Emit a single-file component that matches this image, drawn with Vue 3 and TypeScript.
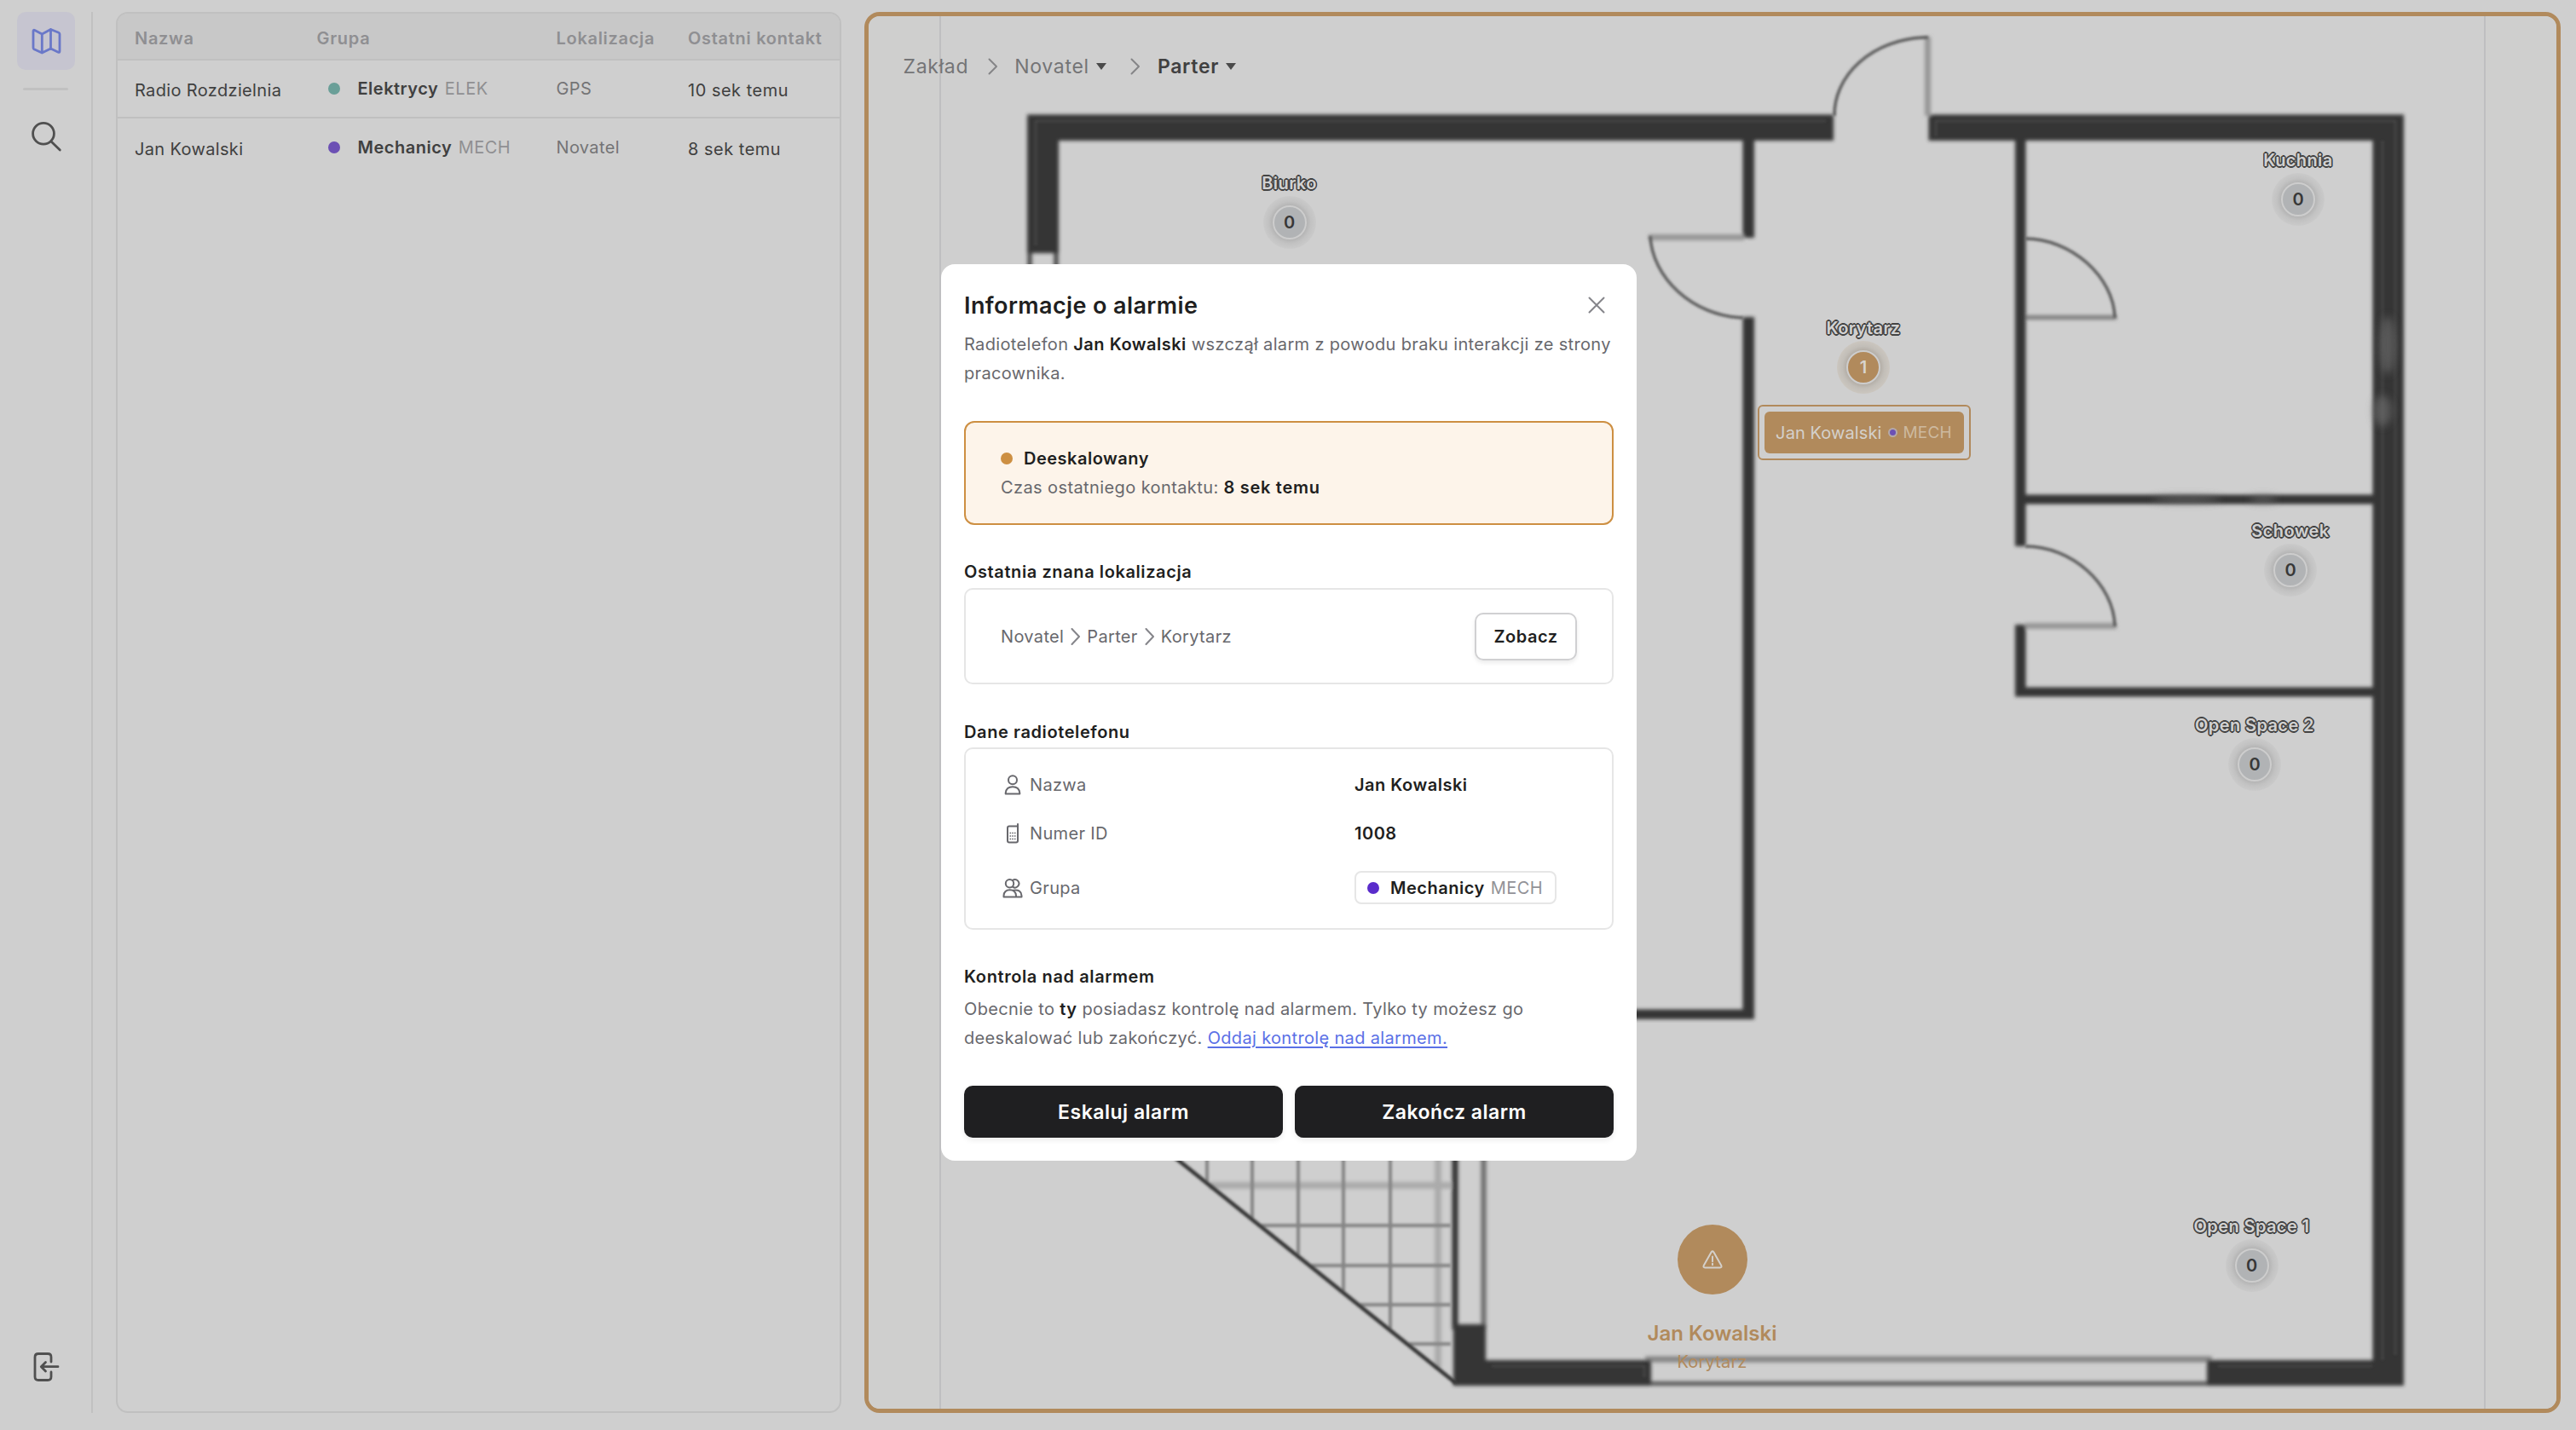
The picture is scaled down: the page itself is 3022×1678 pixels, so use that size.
<script setup lang="ts">
interface Radio {
  name: string
  group: string
  code: string
  color: string
  location: string
  contact: string
}

interface Zone {
  name: string
  count: number
  x: number
  y: number
  alarm?: boolean
}

const radios: Radio[] = [
  { name: 'Radio Rozdzielnia', group: 'Elektrycy', code: 'ELEK', color: '#6a9f98', location: 'GPS', contact: '10 sek temu' },
  { name: 'Jan Kowalski', group: 'Mechanicy', code: 'MECH', color: '#6c50b4', location: 'Novatel', contact: '8 sek temu' },
]

const zones: Zone[] = [
  { name: 'Biurko', count: 0, x: 493.5, y: 241.5 },
  { name: 'Kuchnia', count: 0, x: 1677, y: 214.5 },
  { name: 'Korytarz', count: 1, x: 1167, y: 412, alarm: true },
  { name: 'Schowek', count: 0, x: 1668, y: 650 },
  { name: 'Open Space 2', count: 0, x: 1626, y: 878 },
  { name: 'Open Space 1', count: 0, x: 1622.5, y: 1466 },
]

const gridX = [1416, 1469, 1523, 1576, 1631]
const gridY = [1438, 1485, 1531, 1577]
const diagonalY = (x: number): number => 1362 + (x - 1383) * 0.805
const diagonalX = (y: number): number => 1383 + (y - 1362) / 0.805
</script>

<template>
  <div class="app">
    <nav class="rail">
      <button class="rail-item active">
        <svg width="40" height="40" viewBox="0 0 40 40">
          <path d="M15.3 12 25.5 6.5 34.8 10.2Q36 10.7 36 12V32Q36 33.9 34.3 33.2L25.5 29 15.3 34 6 29.7Q5 29.2 5 28V8.8Q5 6.7 6.8 7.5ZM15.3 12V34M25.5 6.5V29" />
        </svg>
      </button>
      <span class="rail-line"></span>
      <button class="rail-item">
        <svg width="40" height="40" viewBox="0 0 40 40">
          <circle cx="17" cy="16.7" r="12.4" />
          <path d="M26 26 36.3 36" />
        </svg>
      </button>
      <span class="rail-space"></span>
      <button class="rail-item">
        <svg width="40" height="40" viewBox="0 0 40 40">
          <path d="M26 14V8.5Q26 4.5 22 4.5H11Q7 4.5 7 8.5V31.5Q7 35.5 11 35.5H22Q26 35.5 26 31.5V26M34 19.7H15M19.5 14.5 14.3 19.7 19.5 25" />
        </svg>
      </button>
    </nav>

    <section class="table">
      <div class="tr head">
        <span>Nazwa</span><span>Grupa</span><span>Lokalizacja</span><span>Ostatni kontakt</span>
      </div>
      <div v-for="r in radios" :key="r.name" class="tr row">
        <span class="main">{{ r.name }}</span>
        <span class="grp"><i class="dot" :style="{ background: r.color }"></i><b>{{ r.group }}</b><em>{{ r.code }}</em></span>
        <span class="loc">{{ r.location }}</span>
        <span class="main contact">{{ r.contact }}</span>
      </div>
    </section>

    <main class="map">
      <svg class="plan" viewBox="1019 19 1980 1634" width="1980" height="1634">
        <defs>
          <filter id="soft" filterUnits="userSpaceOnUse" x="1019" y="19" width="1980" height="1634">
            <feGaussianBlur stdDeviation="2" />
          </filter>
          <filter id="fine" filterUnits="userSpaceOnUse" x="1019" y="19" width="1980" height="1634">
            <feGaussianBlur stdDeviation="1.4" />
          </filter>
          <filter id="smudge" filterUnits="userSpaceOnUse" x="1019" y="19" width="1980" height="1634">
            <feGaussianBlur stdDeviation="5" />
          </filter>
        </defs>
        <rect x="1019" y="19" width="83" height="1634" fill="#cfcfce" />
        <rect x="2916" y="19" width="83" height="1634" fill="#cfcfce" />
        <path d="M1103 19V1653M2915 19V1653" stroke="#bfbfc1" stroke-width="2" />

        <g filter="url(#soft)">
          <path d="M1419 1391H1702M1687 1340V1605" fill="none" stroke="#ababab" stroke-width="8" />
          <path d="M1707 1340V1560" stroke="#303030" stroke-width="7" />
          <path d="M1740.500 1340V1560" stroke="#6c6c6c" stroke-width="6" />
          <path d="M1208 290V340M1239 290V340" stroke="#404040" stroke-width="5" />
          <path d="M1930 1595H2595" stroke="#858585" stroke-width="7" />
          <path d="M1930 1623.500H2595" stroke="#585858" stroke-width="5" />

          <g fill="#353535">
            <path d="M1205 134.500H2151V165H1242V297H1205Z" />
            <path d="M2262.500 134.500H2820V1626H2589V1596H2783.500V165H2262.500Z" />
            <path d="M1705 1554H1743V1596H1937V1626H1705Z" />
            <path d="M2044.500 160H2058V279H2044.500ZM2044.500 372H2058V1196H1880V1184.500H2044.500Z" />
            <path d="M2364 160H2376.500V580.500H2786V591.500H2376.500V641H2364ZM2364 733H2376.500V806.500H2786V817.500H2364Z" />
          </g>
          <g fill="none" stroke="#969696">
            <path d="M2261.500 43V136M1934 278.500H2046" stroke-width="7" />
            <path d="M2376 372.500H2483" stroke="#7c7c7c" stroke-width="5" />
            <path d="M2376 734.500H2483" stroke-width="7" />
          </g>
        </g>
        <g filter="url(#fine)" fill="none">
          <g stroke="#858585" stroke-width="4">
            <path v-for="x in gridX" :key="'x' + x" :d="`M${x} 1340V${diagonalY(x)}`" />
            <path v-for="y in gridY" :key="'y' + y" :d="`M${diagonalX(y)} ${y}H1702`" />
          </g>
          <path d="M1370 1351.500 1708 1623" stroke="#333" stroke-width="4.500" />
          <g stroke="#484848" stroke-width="2">
            <path d="M2142 142H1215V288M2810 1590V142H2271V160M2795 165V1596M2602 1603H2783M1750 1603H1929V1616" />
          </g>
          <g stroke="#5a5a5a" stroke-width="3.500">
            <path d="M2152 136A110 91 0 0 1 2256 44H2262" />
            <path d="M1936 277C1938 325 1985 371 2045 373" />
            <path d="M2376 280C2430 280 2480 325 2481 373" />
            <path d="M2376 641C2430 641 2480 685 2481 735" />
          </g>
        </g>
        <g filter="url(#smudge)" fill="#777">
          <ellipse cx="2801" cy="405" rx="9" ry="34" opacity="0.55" />
          <ellipse cx="2795" cy="482" rx="11" ry="18" opacity="0.55" />
          <ellipse cx="2565" cy="586" rx="40" ry="4" opacity="0.6" />
          <ellipse cx="2655" cy="586" rx="16" ry="4" opacity="0.6" />
        </g>
      </svg>

      <div v-for="z in zones" :key="z.name" class="zone" :class="{ alarm: z.alarm }" :style="{ left: z.x + 'px', top: z.y + 'px' }">
        <span class="zone-name">{{ z.name }}</span>
        <span class="zone-halo"><span class="zone-count">{{ z.count }}</span></span>
      </div>

      <div class="tag"><div class="tag-in"><span>Jan Kowalski</span><i></i><em>MECH</em></div></div>

      <div class="alert-pin">
        <span class="alert-circle">
          <svg width="28" height="28" viewBox="0 0 28 28">
            <path d="M12.600 5.300 3.700 21Q2.800 23.400 5.200 23.600H22.800Q25.200 23.400 24.300 21L15.400 5.300Q14 3.400 12.600 5.300ZM14 10.500V16.200M14 18.800V20.200" />
          </svg>
        </span>
        <strong>Jan Kowalski</strong>
        <span class="alert-place">Korytarz</span>
      </div>

      <div class="crumbs">
        <span class="c1">Zakład</span>
        <svg class="chev" width="12" height="20" viewBox="0 0 12 20"><path d="M1.500 1.500 10 10 1.500 18.500" /></svg>
        <span class="c2">Novatel</span>
        <svg class="caret" width="12" height="8" viewBox="0 0 12 8"><path d="M0 0H12L6 8Z" /></svg>
        <svg class="chev second" width="12" height="20" viewBox="0 0 12 20"><path d="M1.500 1.500 10 10 1.500 18.500" /></svg>
        <span class="c3">Parter</span>
        <svg class="caret" width="12" height="8" viewBox="0 0 12 8"><path d="M0 0H12L6 8Z" /></svg>
      </div>
    </main>

    <div class="overlay">
      <div class="modal">
        <header>
          <h1>Informacje o alarmie</h1>
          <svg width="20" height="20" viewBox="0 0 20 20"><path d="M1.500 1.500 18.500 18.500M18.500 1.500 1.500 18.500" /></svg>
        </header>
        <p class="desc">Radiotelefon <b>Jan Kowalski</b> wszczął alarm z powodu braku interakcji ze strony<br />pracownika.</p>

        <div class="status">
          <div class="status-line"><i></i><b>Deeskalowany</b></div>
          <div class="status-time">Czas ostatniego kontaktu: <b>8 sek temu</b></div>
        </div>

        <h2 class="h-loc">Ostatnia znana lokalizacja</h2>
        <div class="box place">
          <div class="path">
            <span>Novatel</span>
            <svg width="12" height="20" viewBox="0 0 12 20"><path d="M1.500 1 10 10 1.500 19" /></svg>
            <span>Parter</span>
            <svg width="12" height="20" viewBox="0 0 12 20"><path d="M1.500 1 10 10 1.500 19" /></svg>
            <span>Korytarz</span>
          </div>
          <button class="see">Zobacz</button>
        </div>

        <h2 class="h-data">Dane radiotelefonu</h2>
        <div class="box data">
          <div class="field">
            <svg width="24" height="24" viewBox="0 0 24 24"><circle cx="12" cy="6.300" r="5" /><path d="M3.700 22.500V21.500Q4.500 14.300 12 14.300T20.300 21.500V22.500Z" /></svg>
            <span>Nazwa</span><b>Jan Kowalski</b>
          </div>
          <div class="field phone">
            <svg width="24" height="24" viewBox="0 0 24 24">
              <path d="M18 8V20.500Q18 22.500 16 22.500H8Q6 22.500 6 20.500V5.500Q6 3.500 8 3.500H18ZM18 8V1" />
              <path class="keys" d="M8.500 11.500H15.500M8.500 15H15.500M8.500 18.500H15.500" />
            </svg>
            <span>Numer ID</span><b>1008</b>
          </div>
          <div class="field last">
            <svg width="24" height="24" viewBox="0 0 24 24"><circle cx="8.500" cy="6.800" r="4.700" /><path d="M12 2.900A4.700 4.700 0 1 1 12 10.700M1.500 22.500V21Q2 14.300 8.700 14.300T16 21V22.500ZM13 14.700Q22 13.500 22.500 21V22.500H16" /></svg>
            <span>Grupa</span>
            <div class="chip"><i></i><b>Mechanicy</b><em>MECH</em></div>
          </div>
        </div>

        <h2 class="h-ctl">Kontrola nad alarmem</h2>
        <p class="ctl">Obecnie to <b>ty</b> posiadasz kontrolę nad alarmem. Tylko ty możesz go<br />deeskalować lub zakończyć. <a>Oddaj kontrolę nad alarmem.</a></p>

        <div class="actions">
          <button>Eskaluj alarm</button>
          <button>Zakończ alarm</button>
        </div>
      </div>
    </div>
  </div>
</template>

<style>
body {
  margin: 0;
  background: #cfcfcf;
}
</style>

<style scoped>
.app {
  position: relative;
  display: flex;
  box-sizing: border-box;
  width: 3022px;
  height: 1678px;
  padding: 14px 18px 20px 0;
  overflow: hidden;
  background: #cfcfcf;
  color: #404040;
  font: 400 20px/24px Inter, "Liberation Sans", sans-serif;
  letter-spacing: 0.35px;
}
button {
  border: 0;
  padding: 0;
  background: none;
  font: inherit;
  letter-spacing: 0.5px;
  color: inherit;
}
b, strong {
  font-weight: 600;
  letter-spacing: 0.5px;
}
em, i {
  font-style: normal;
  letter-spacing: 0.5px;
}
svg {
  display: block;
  flex: none;
  fill: none;
  stroke-linecap: round;
  stroke-linejoin: round;
}

/* Rail */
.rail {
  display: flex;
  flex-direction: column;
  align-items: flex-start;
  box-sizing: border-box;
  width: 109px;
  border-right: 2px solid #c1c1c1;
}
.rail-item {
  display: flex;
  align-items: center;
  justify-content: center;
  width: 68px;
  height: 68px;
  margin-left: 20px;
  border-radius: 10px;
}
.rail-item svg {
  stroke: #505050;
  stroke-width: 2.8;
}
.rail-item.active {
  background: #c6c5d0;
}
.rail-item.active svg {
  stroke: #6a78c8;
}
.rail-line {
  width: 53px;
  height: 3px;
  margin: 21px 0 20px 27px;
  border-radius: 2px;
  background: #c1c1c1;
}
.rail-space {
  flex: 1;
}
.rail-item:last-child {
  margin-bottom: 20px;
}

/* Radio list */
.table {
  box-sizing: border-box;
  width: 851px;
  margin-left: 27px;
  border: 2px solid #c0c0c0;
  border-radius: 14px;
  overflow: hidden;
}
.tr {
  display: grid;
  grid-template-columns: 213.5px 281px 154.5px 1fr;
  align-items: center;
  box-sizing: border-box;
  padding-left: 20px;
  white-space: nowrap;
}
.head {
  height: 55px;
  padding-top: 4px;
  border-bottom: 2px solid #c0c0c0;
  background: #c8c8c8;
  color: #8f8f92;
  font-weight: 600;
  letter-spacing: 0.7px;
}
.row {
  height: 68px;
  padding-top: 0;
  border-bottom: 2px solid #c0c0c0;
}
.row:last-child {
  border-bottom-color: transparent;
  padding-top: 2px;
}
.main {
  padding-top: 4px;
}
.contact {
  letter-spacing: 0.5px;
}
.loc {
  color: #747476;
}
.grp {
  display: flex;
  align-items: center;
}
.grp b {
  margin-left: 21px;
}
.grp em {
  margin-left: 7.500px;
  color: #8f8f92;
}
.dot {
  width: 14px;
  height: 14px;
  margin-left: 13px;
  border-radius: 50%;
}

/* Map */
.map {
  position: relative;
  flex: 1;
  margin-left: 27px;
  border: 5px solid #b18a5c;
  border-radius: 18px;
  overflow: hidden;
}
.plan {
  position: absolute;
  left: 0;
  top: 0;
  stroke-linecap: butt;
  stroke-linejoin: miter;
}
.crumbs {
  position: relative;
  display: flex;
  align-items: center;
  padding: 44px 0 0 40.500px;
  font-size: 23px;
  line-height: 30px;
  letter-spacing: 0.7px;
  color: #747476;
}
.chev {
  margin: 0 19px 0 23px;
  stroke: #858587;
  stroke-width: 2;
}
.chev.second {
  margin: 0 20px 0 28px;
}
.caret {
  margin-left: 8px;
  fill: #4a4a4a;
}
.c3 {
  color: #404040;
  font-weight: 600;
}
.zone {
  position: absolute;
  display: flex;
  flex-direction: column;
  align-items: center;
  width: 200px;
  margin: -58px 0 0 -100px;
}
.zone-name {
  height: 27px;
  color: #d2d2d2;
  font-weight: 600;
  letter-spacing: 0.4px;
  text-shadow: 1.600px 0 0 #444, -1.600px 0 0 #444, 0 1.600px 0 #444, 0 -1.600px 0 #444,
    1.200px 1.200px 0 #444, -1.200px 1.200px 0 #444, 1.200px -1.200px 0 #444, -1.200px -1.200px 0 #444;
}
.zone-halo {
  display: flex;
  align-items: center;
  justify-content: center;
  width: 62px;
  height: 62px;
  border-radius: 50%;
  background: radial-gradient(closest-side, #b2b2b2 62%, #c2c2c2 80%, #cacaca 100%);
}
.zone-count {
  box-sizing: border-box;
  width: 40px;
  height: 40px;
  border: 2px solid #cdcdcd;
  border-radius: 50%;
  background: #b1b3b5;
  color: #383838;
  font-weight: 600;
  line-height: 36px;
  text-align: center;
  letter-spacing: 0;
}
.alarm .zone-halo {
  background: radial-gradient(closest-side, #b2aca4 62%, #c2beb8 80%, #cbc6bf 100%);
}
.alarm .zone-count {
  background: #b18a5c;
  color: #d8d4cf;
}
.tag {
  position: absolute;
  left: 1042.500px;
  top: 456px;
  box-sizing: border-box;
  width: 250px;
  height: 65px;
  padding: 6px 6px 6px 6px;
  border: 2px solid #b18a5c;
  border-radius: 6px;
  background: #cfcfcf;
}
.tag-in {
  display: flex;
  align-items: center;
  justify-content: center;
  height: 49px;
  border-radius: 6px;
  background: #b18a5c;
  color: #d4d0cb;
  letter-spacing: 0.1px;
  white-space: nowrap;
}
.tag i {
  width: 7px;
  height: 7px;
  margin: 0 7px;
  border: 2px solid #b5aaa8;
  border-radius: 50%;
  background: #6c50b4;
}
.tag em {
  color: #cdb99f;
  font-size: 19px;
  letter-spacing: 0.2px;
}
.alert-pin {
  position: absolute;
  left: 889.500px;
  top: 1418px;
  display: flex;
  flex-direction: column;
  align-items: center;
  width: 200px;
  color: #b18a5c;
}
.alert-circle {
  display: flex;
  align-items: center;
  justify-content: center;
  width: 82px;
  height: 82px;
  border-radius: 50%;
  background: #b18a5c;
}
.alert-circle svg {
  stroke: #d4d0cb;
  stroke-width: 2;
}
.alert-pin strong {
  margin-top: 30px;
  font-size: 24px;
  line-height: 32px;
  letter-spacing: 0;
}
.alert-place {
  margin-top: 5px;
  letter-spacing: 0.2px;
}

/* Alarm dialog */
.overlay {
  position: absolute;
  inset: 0;
}
.modal {
  position: absolute;
  left: 1104px;
  top: 310px;
  box-sizing: border-box;
  width: 816px;
  height: 1052px;
  padding: 32px 27px 27px;
  border-radius: 16px;
  background: #fff;
  color: #68686d;
  letter-spacing: 0.34px;
}
.modal b, h1, h2 {
  color: #1f1f21;
}
header {
  display: flex;
  justify-content: space-between;
  padding-right: 10px;
}
header svg {
  margin-top: 6px;
  stroke: #85858a;
  stroke-width: 2;
}
h1 {
  margin: 0;
  font-size: 27px;
  line-height: 34px;
  font-weight: 600;
  letter-spacing: 0.4px;
}
h2 {
  margin: 0;
  font-size: 20px;
  line-height: 24px;
  font-weight: 600;
  letter-spacing: 0.6px;
}
p {
  margin: 0;
  line-height: 34px;
  white-space: nowrap;
}
.desc {
  margin-top: 11px;
}
.status {
  box-sizing: border-box;
  height: 122px;
  margin-top: 39px;
  padding: 25px 41px;
  border: 2px solid #cd8f42;
  border-radius: 12px;
  background: #fdf4ea;
  line-height: 34px;
}
.status-line {
  display: flex;
  align-items: center;
}
.status-time {
  letter-spacing: 0.4px;
}
.status-time b {
  letter-spacing: 0.7px;
}
.status-line i, .chip i {
  width: 14px;
  height: 14px;
  margin-right: 13px;
  border-radius: 50%;
  background: #cd8f42;
}
.h-loc {
  margin-top: 43px;
}
.box {
  box-sizing: border-box;
  border: 2px solid #e6e6e6;
  border-radius: 10px;
}
.place {
  display: flex;
  align-items: center;
  justify-content: space-between;
  height: 113px;
  margin-top: 7px;
  padding: 0 41px;
}
.path {
  display: flex;
  align-items: center;
}
.path svg {
  margin: 0 7px 0 8px;
  stroke: #85858a;
  stroke-width: 2;
}
.see {
  box-sizing: border-box;
  width: 120px;
  height: 56px;
  border: 2px solid #d0d0d2;
  border-radius: 10px;
  color: #1f1f21;
  font-weight: 600;
  box-shadow: 0 3px 5px rgba(0, 0, 0, 0.08);
}
.h-data {
  margin-top: 44px;
}
.data {
  height: 214px;
  margin-top: 6px;
  padding: 30px 41px 0;
}
.field {
  display: flex;
  align-items: center;
  height: 24px;
}
.field svg {
  margin: 0 8px 0 2px;
  stroke: #68686d;
  stroke-width: 2;
}
.field .keys {
  stroke-width: 1.600;
  stroke-dasharray: 1.600 1.100;
  stroke-linecap: butt;
}
.field > span {
  width: 381px;
}
.phone {
  margin-top: 33px;
}
.last {
  height: 39px;
  margin-top: 32px;
}
.chip {
  display: flex;
  align-items: center;
  box-sizing: border-box;
  width: 237px;
  height: 39px;
  padding-left: 13px;
  border: 2px solid #e6e6e6;
  border-radius: 8px;
}
.chip i {
  background: #5a2ccb;
}
.chip em {
  margin-left: 7px;
  color: #929297;
}
.h-ctl {
  margin-top: 43px;
}
.ctl {
  margin-top: 9px;
}
.ctl a {
  color: #5a70e6;
  text-decoration: underline;
  text-decoration-thickness: 2px;
  text-underline-offset: 3px;
}
.actions {
  display: flex;
  gap: 14px;
  margin-top: 39px;
}
.actions button {
  flex: 1;
  height: 61px;
  border-radius: 10px;
  background: #1f1f21;
  color: #fff;
  font-size: 23px;
  font-weight: 600;
  box-shadow: 0 3px 6px rgba(0, 0, 0, 0.08);
}
</style>
